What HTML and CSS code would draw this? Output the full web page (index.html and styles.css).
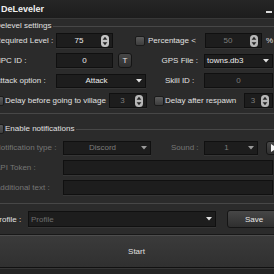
FILE: index.html
```html
<!DOCTYPE html>
<html>
<head>
	<meta charset="UTF-8"/>
	<title>DeLeveler</title>
	<link rel="stylesheet" href="styles.css">
</head>
<body>

<div class="window">
	<div class="titlebar">
		<span class="title">DeLeveler</span>
		<span class="minimize"></span>
	</div>

	<div class="content">

		<fieldset class="group group-delevel">
			<legend>Delevel settings</legend>

			<div class="row">
				<span class="lbl lbl-main">Required Level :</span>
				<div class="field w57">
					<span class="val">75</span>
					<svg class="spin" width="8" height="12" viewBox="0 0 8 12"><rect width="8" height="12" rx="3.5" fill="#c4c4c4"/><path d="M4 1.8 6.4 4.8H1.6Z M4 10.2 6.4 7.2H1.6Z" fill="#262626"/></svg>
				</div>
				<span class="check check-pct"></span>
				<span class="lbl lbl-pct">Percentage &lt;</span>
				<div class="field w57 off">
					<span class="val">50</span>
					<svg class="spin" width="8" height="12" viewBox="0 0 8 12"><rect width="8" height="12" rx="3.5" fill="#b8b8b8"/><path d="M4 1.8 6.4 4.8H1.6Z M4 10.2 6.4 7.2H1.6Z" fill="#262626"/></svg>
				</div>
				<span class="lbl lbl-percent">%</span>
			</div>

			<div class="row">
				<span class="lbl lbl-main">NPC ID :</span>
				<div class="field w57"><span class="val">0</span></div>
				<span class="btn btn-t">T</span>
				<span class="lbl lbl-gps">GPS File :</span>
				<div class="field combo grow">
					<span class="val left">towns.db3</span>
					<svg class="arrow" width="6" height="4" viewBox="0 0 6 4"><path d="M0 0h6L3 3.5z" fill="#e0e0e0"/></svg>
				</div>
			</div>

			<div class="row">
				<span class="lbl lbl-main">Attack option :</span>
				<div class="field combo w90">
					<span class="val">Attack</span>
					<svg class="arrow" width="6" height="4" viewBox="0 0 6 4"><path d="M0 0h6L3 3.5z" fill="#e0e0e0"/></svg>
				</div>
				<span class="lbl lbl-skill">Skill ID :</span>
				<div class="field grow off"><span class="val">0</span></div>
			</div>

			<div class="row">
				<span class="check check-village"></span>
				<span class="lbl lbl-village">Delay before going to village</span>
				<div class="field w38 off">
					<span class="val">3</span>
					<svg class="spin" width="8" height="12" viewBox="0 0 8 12"><rect width="8" height="12" rx="3.5" fill="#b8b8b8"/><path d="M4 1.8 6.4 4.8H1.6Z M4 10.2 6.4 7.2H1.6Z" fill="#262626"/></svg>
				</div>
				<span class="check check-respawn"></span>
				<span class="lbl lbl-respawn">Delay after respawn</span>
				<div class="field grow off">
					<span class="val">3</span>
					<svg class="spin" width="8" height="12" viewBox="0 0 8 12"><rect width="8" height="12" rx="3.5" fill="#b8b8b8"/><path d="M4 1.8 6.4 4.8H1.6Z M4 10.2 6.4 7.2H1.6Z" fill="#262626"/></svg>
				</div>
			</div>
		</fieldset>

		<fieldset class="group group-notify">
			<legend><span class="check check-legend"></span>Enable notifications</legend>

			<div class="row">
				<span class="lbl lbl-notify dim">Notification type :</span>
				<div class="field combo w88 off">
					<span class="val">Discord</span>
					<svg class="arrow" width="6" height="4" viewBox="0 0 6 4"><path d="M0 0h6L3 3.5z" fill="#9a9a9a"/></svg>
				</div>
				<span class="lbl lbl-sound dim">Sound :</span>
				<div class="field combo w54 off">
					<span class="val">1</span>
					<svg class="arrow" width="6" height="4" viewBox="0 0 6 4"><path d="M0 0h6L3 3.5z" fill="#9a9a9a"/></svg>
				</div>
				<span class="btn btn-play"><svg width="6" height="8" viewBox="0 0 6 8"><path d="M0 0 6 4 0 8z" fill="#f2f2f2"/></svg></span>
			</div>

			<div class="row">
				<span class="lbl lbl-notify dim">API Token :</span>
				<div class="field grow off"></div>
			</div>

			<div class="row">
				<span class="lbl lbl-notify dim">Additional text :</span>
				<div class="field grow off"></div>
			</div>
		</fieldset>

		<div class="row row-profile">
			<span class="lbl lbl-profile">Profile :</span>
			<div class="field combo w188">
				<span class="val left placeholder">Profile</span>
				<svg class="arrow" width="6" height="4" viewBox="0 0 6 4"><path d="M0 0h6L3 3.5z" fill="#e0e0e0"/></svg>
			</div>
			<span class="btn btn-save">Save</span>
		</div>
	</div>

	<div class="start">Start</div>
	<div class="footer"></div>
</div>

</body>
</html>
```

FILE: styles.css
```css
html {
	background: #2b2b2b;
	font-family: 'Liberation Sans', Arial, sans-serif;
	font-size: 8px;
	color: #e0e0e0;
}

body {
	margin: 0;
	padding: 0;
	width: 274px;
	height: 274px;
	overflow: hidden;
}

/* window is a bit wider than the shot, both sides are cut */
.window {
	margin-left: -8px;
	width: 289px;
	height: 274px;
	display: flex;
	flex-direction: column;
}

/* title bar */
.titlebar {
	height: 18px;
	display: flex;
	align-items: center;
	background: linear-gradient(#262626, #1d1d1d);
	border-bottom: 1px solid #383838;
}

.title {
	margin-left: 9px;
	font-size: 9px;
	font-weight: bold;
	color: #f0f0f0;
}

.minimize {
	margin-left: auto;
	margin-right: 9px;
	margin-top: 6px;
	width: 6px;
	height: 2px;
	background: #dcdcdc;
}

.content {
	padding: 2px 4px 0 2px;
}

/* group boxes */
.group {
	margin: 0;
	border: 1px solid #474747;
	padding: 2px 3px 5px 0;
	min-width: 0;
}

.group legend {
	margin: 0;
	padding: 0 2px 0 0;
	line-height: 10px;
	display: flex;
	align-items: center;
}

.group-notify {
	margin-top: 10px;
	padding-top: 6px;
	padding-bottom: 8px;
}

.row {
	display: flex;
	align-items: center;
	height: 15px;
	margin-bottom: 5px;
}

.group .row:last-child {
	margin-bottom: 0;
}

.lbl {
	white-space: nowrap;
	flex-shrink: 0;
}

.dim {color: #767676;}

.lbl-main    {width: 61px;}
.lbl-pct     {width: 57px; margin-left: 3px;}
.lbl-percent {margin-left: 4px;}
.lbl-gps     {width: 66px; margin-left: 0; text-align: right;}
.lbl-skill   {width: 39px; padding-left: 19px;}
.lbl-village {width: 104px; margin-left: 1px;}
.lbl-respawn {width: 79px; margin-left: 1px;}
.lbl-notify  {width: 68px;}
.lbl-sound   {width: 33px; padding-left: 20px;}
.lbl-profile {width: 34px;}

/* inputs */
.field {
	box-sizing: border-box;
	height: 15px;
	display: flex;
	align-items: center;
	flex-shrink: 0;
	background: #1d1d1d;
	border: 1px solid #101010;
	box-shadow: 0 1px 0 #353535;
	color: #ececec;
}

.field .val {
	flex: 1;
	text-align: center;
	white-space: nowrap;
}

.field .val.left {
	text-align: left;
	padding-left: 2px;
}

.field.off {color: #7c7c7c;}
.placeholder {color: #6e6e6e;}

.grow {flex: 1;}
.w38  {width: 38px;}
.w54  {width: 54px;}
.w57  {width: 57px;}
.w88  {width: 88px;}
.w90  {width: 90px;}
.w188 {width: 188px;}

.w57 + .btn-t {margin-left: 5px;}
.lbl-gps + .field {margin-left: 6px;}

.spin {
	margin-right: 3px;
	flex-shrink: 0;
}

.arrow {
	margin-right: 3px;
	flex-shrink: 0;
}

.combo {height: 14px;}

/* checkboxes */
.check {
	box-sizing: border-box;
	width: 10px;
	height: 10px;
	flex-shrink: 0;
	border-radius: 2px;
	border: 1px solid #1b1b1b;
	background: linear-gradient(#5c5c5c, #3d3d3d);
}

.check-pct     {margin-left: 22px;}
.check-village {margin-left: -1px;}
.check-respawn {margin-left: 7px;}
.check-legend  {margin-left: -1px; margin-right: 1px;}

/* buttons */
.btn {
	box-sizing: border-box;
	display: flex;
	align-items: center;
	justify-content: center;
	flex-shrink: 0;
	border: 1px solid #151515;
	border-radius: 3px;
	background: linear-gradient(#474747, #2f2f2f);
	color: #e6e6e6;
}

.btn-t {
	width: 14px;
	height: 15px;
}

.btn-play {
	width: 16px;
	height: 14px;
	margin-left: 8px;
}

.row-profile {
	margin-top: 6px;
	height: 18px;
	margin-bottom: 0;
}

.row-profile .combo {height: 16px;}

.btn-save {
	width: 54px;
	height: 18px;
	margin-left: 11px;
}

/* start */
.start {
	margin-top: 6px;
	border-top: 1px solid #181818;
	height: 32px;
	display: flex;
	align-items: center;
	justify-content: center;
	background: linear-gradient(#3b3b3b, #303030);
	box-shadow: inset 0 1px 0 #4d4d4d;
	border-bottom: 1px solid #111;
}

.footer {
	flex: 1;
	background: #242424;
	border-top: 1px solid #363636;
}
```
